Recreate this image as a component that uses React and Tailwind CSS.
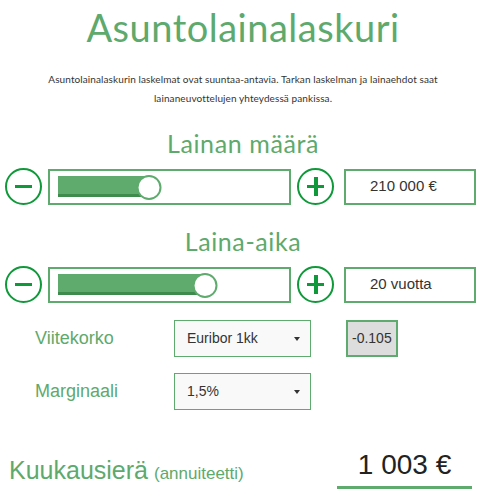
import React from 'react';

const GREEN = 'text-[#5ea96c]';

const RoundButton = ({ plus }) => (
    <button className="relative flex h-[37px] w-[37px] shrink-0 items-center justify-center rounded-full border-2 border-[#10993a] bg-white">
        <span className="absolute h-[3px] w-[17px] bg-[#10993a]" />
        {plus && <span className="absolute h-[19px] w-[4px] bg-[#10993a]" />}
    </button>
);

const Slider = ({ percent }) => (
    <div className="flex h-[36px] w-[243px] items-center border-2 border-[#5faa6d] px-[8px]">
        <div className="relative h-[21px] w-full">
            <div
                className="absolute left-0 top-0 h-[21px] border-b-[3px] border-[#3f8a4d] bg-[#5faa6d]"
                style={{ width: `${percent}%` }}
            />
            <div
                className="absolute top-[-1px] h-[25px] w-[25px] -translate-x-1/2 rounded-full border-2 border-[#5faa6d] bg-white"
                style={{ left: `${percent}%` }}
            />
        </div>
    </div>
);

const SliderRow = ({ title, value, percent }) => (
    <div>
        <h2 className={`text-center font-['Lato',sans-serif] text-[25px] leading-[30px] tracking-[0.6px] ${GREEN}`}>{title}</h2>
        <div className="mt-[10px] flex items-center pl-[5px]">
            <RoundButton />
            <div className="ml-[6px]"><Slider percent={percent} /></div>
            <div className="ml-[6px]"><RoundButton plus /></div>
            <div className="ml-[10px] flex h-[36px] w-[132px] items-center border-2 border-[#5faa6d] pl-[24px] text-[15px] text-[#333]">
                {value}
            </div>
        </div>
    </div>
);

const Select = ({ value }) => (
    <div className="flex h-[37px] w-[137px] items-center justify-between border border-[#5faa6d] bg-[#f9f9f9] pl-[12px] pr-[10px] text-[14px] text-[#333]">
        <span>{value}</span>
        <span className="h-0 w-0 border-x-[3px] border-t-[4px] border-x-transparent border-t-[#333]" />
    </div>
);

export default function App() {
    return (
        <div className="w-[486px] bg-white font-['Liberation_Sans',Arial,sans-serif]">
            <h1 className={`pt-[4px] text-center font-['Lato',sans-serif] text-[38px] leading-[46px] tracking-[0.5px] ${GREEN}`}>
                Asuntolainalaskuri
            </h1>
            <p className="mx-auto mt-[20px] w-[420px] text-center font-['Lato',sans-serif] text-[10px] leading-[19px] tracking-[0.1px] text-[#333]">
                Asuntolainalaskurin laskelmat ovat suuntaa-antavia. Tarkan laskelman ja lainaehdot saat lainaneuvottelujen yhteydessä pankissa.
            </p>
            <div className="mt-[20px]">
                <SliderRow title="Lainan määrä" value="210 000 €" percent={41} />
            </div>
            <div className="mt-[21px]">
                <SliderRow title="Laina-aika" value="20 vuotta" percent={66} />
            </div>
            <div className="mt-[17px] flex items-center">
                <div className={`w-[174px] pl-[35px] text-[18px] ${GREEN}`}>Viitekorko</div>
                <Select value="Euribor 1kk" />
                <div className="ml-[35px] flex h-[37px] items-center border-2 border-[#5faa6d] bg-[#dddddd] px-[4px] text-[14px] text-[#333]">
                    -0.105
                </div>
            </div>
            <div className="mt-[16px] flex items-center">
                <div className={`w-[174px] pl-[35px] text-[18px] ${GREEN}`}>Marginaali</div>
                <Select value="1,5%" />
            </div>
            <div className="mt-[38px] flex items-end pb-[6px]">
                <div className={`pl-[9px] ${GREEN}`}>
                    <span className="text-[25px]">Kuukausierä</span>
                    <span className="ml-[6px] text-[17px]">(annuiteetti)</span>
                </div>
                <div className="ml-auto mr-[14px] w-[135px] border-b-[3px] border-[#5faa6d] pb-[4px] text-center text-[28px] leading-[34px] text-[#222]">
                    1 003 €
                </div>
            </div>
        </div>
    );
}
